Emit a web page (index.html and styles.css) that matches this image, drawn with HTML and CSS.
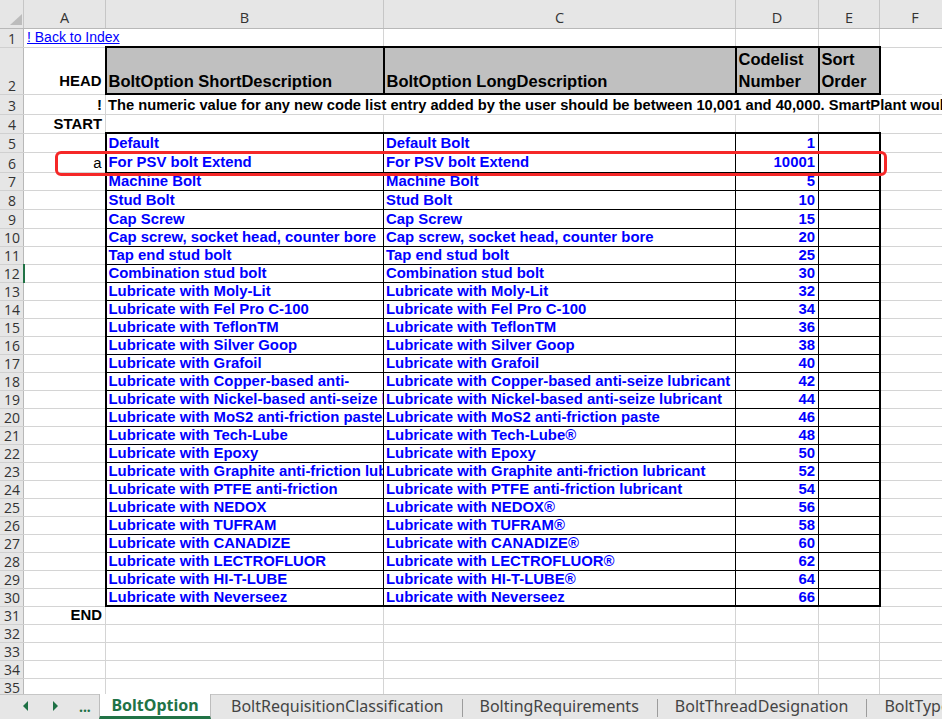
FILE: index.html
```html
<!DOCTYPE html>
<html lang="en">
<head>
  <meta charset="UTF-8" />
  <title>BoltOption</title>
  <link rel="stylesheet" href="styles.css">
</head>
<body>

  <!-- Worksheet -->
  <div class="sheet">
    <table class="grid">
      <colgroup>
        <col class="c-rh"><col class="c-a"><col class="c-b"><col class="c-c"><col class="c-d"><col class="c-e"><col class="c-f">
      </colgroup>
      <thead>
        <tr class="r-cols">
          <th class="corner"><svg width="12" height="11" viewBox="0 0 12 11"><path d="M12 0V11H0Z" fill="#bcbcbc"/></svg></th>
          <th class="ch">A</th><th class="ch">B</th><th class="ch">C</th><th class="ch">D</th><th class="ch">E</th><th class="ch">F</th>
        </tr>
      </thead>
      <tbody>
        <tr><th class="rh">1</th><td colspan="2"><a href="#" class="link">! Back to Index</a></td><td></td><td></td><td></td><td></td></tr>
        <tr class="r46">
          <th class="rh">2</th>
          <td class="lbl head">HEAD</td>
          <td class="hd">BoltOption ShortDescription</td>
          <td class="hd">BoltOption LongDescription</td>
          <td class="hd">Codelist Number</td>
          <td class="hd">Sort Order</td>
          <td></td>
        </tr>
        <tr class="r20"><th class="rh">3</th><td class="lbl">!</td><td colspan="5" class="note">The numeric value for any new code list entry added by the user should be between 10,001 and 40,000. SmartPlant would not recognise values outside of this range.</td></tr>
        <tr class="r19"><th class="rh">4</th><td class="lbl">START</td><td></td><td></td><td></td><td></td><td></td></tr>

        <tr class="r19"><th class="rh">5</th><td></td><td class="d dl dt">Default</td><td class="d dt">Default Bolt</td><td class="d dt num">1</td><td class="d dr dt"></td><td></td></tr>
        <tr class="r20"><th class="rh">6</th><td class="flag">a</td><td class="d dl">For PSV bolt Extend</td><td class="d">For PSV bolt Extend</td><td class="d num">10001</td><td class="d dr"></td><td></td></tr>
        <tr><th class="rh">7</th><td></td><td class="d dl">Machine Bolt</td><td class="d">Machine Bolt</td><td class="d num">5</td><td class="d dr"></td><td></td></tr>
        <tr class="r19"><th class="rh">8</th><td></td><td class="d dl">Stud Bolt</td><td class="d">Stud Bolt</td><td class="d num">10</td><td class="d dr"></td><td></td></tr>
        <tr class="r19"><th class="rh">9</th><td></td><td class="d dl">Cap Screw</td><td class="d">Cap Screw</td><td class="d num">15</td><td class="d dr"></td><td></td></tr>
        <tr><th class="rh">10</th><td></td><td class="d dl">Cap screw, socket head, counter bore</td><td class="d">Cap screw, socket head, counter bore</td><td class="d num">20</td><td class="d dr"></td><td></td></tr>
        <tr><th class="rh">11</th><td></td><td class="d dl">Tap end stud bolt</td><td class="d">Tap end stud bolt</td><td class="d num">25</td><td class="d dr"></td><td></td></tr>
        <tr><th class="rh sel">12</th><td></td><td class="d dl">Combination stud bolt</td><td class="d">Combination stud bolt</td><td class="d num">30</td><td class="d dr"></td><td></td></tr>
        <tr><th class="rh">13</th><td></td><td class="d dl">Lubricate with Moly-Lit</td><td class="d">Lubricate with Moly-Lit</td><td class="d num">32</td><td class="d dr"></td><td></td></tr>
        <tr><th class="rh">14</th><td></td><td class="d dl">Lubricate with Fel Pro C-100</td><td class="d">Lubricate with Fel Pro C-100</td><td class="d num">34</td><td class="d dr"></td><td></td></tr>
        <tr><th class="rh">15</th><td></td><td class="d dl">Lubricate with TeflonTM</td><td class="d">Lubricate with TeflonTM</td><td class="d num">36</td><td class="d dr"></td><td></td></tr>
        <tr><th class="rh">16</th><td></td><td class="d dl">Lubricate with Silver Goop</td><td class="d">Lubricate with Silver Goop</td><td class="d num">38</td><td class="d dr"></td><td></td></tr>
        <tr><th class="rh">17</th><td></td><td class="d dl">Lubricate with Grafoil</td><td class="d">Lubricate with Grafoil</td><td class="d num">40</td><td class="d dr"></td><td></td></tr>
        <tr><th class="rh">18</th><td></td><td class="d dl"><div class="wrap">Lubricate with Copper-based anti-seize lubricant</div></td><td class="d">Lubricate with Copper-based anti-seize lubricant</td><td class="d num">42</td><td class="d dr"></td><td></td></tr>
        <tr><th class="rh">19</th><td></td><td class="d dl">Lubricate with Nickel-based anti-seize lubricant</td><td class="d">Lubricate with Nickel-based anti-seize lubricant</td><td class="d num">44</td><td class="d dr"></td><td></td></tr>
        <tr><th class="rh">20</th><td></td><td class="d dl">Lubricate with MoS2 anti-friction paste</td><td class="d">Lubricate with MoS2 anti-friction paste</td><td class="d num">46</td><td class="d dr"></td><td></td></tr>
        <tr><th class="rh">21</th><td></td><td class="d dl">Lubricate with Tech-Lube</td><td class="d">Lubricate with Tech-Lube&reg;</td><td class="d num">48</td><td class="d dr"></td><td></td></tr>
        <tr><th class="rh">22</th><td></td><td class="d dl">Lubricate with Epoxy</td><td class="d">Lubricate with Epoxy</td><td class="d num">50</td><td class="d dr"></td><td></td></tr>
        <tr><th class="rh">23</th><td></td><td class="d dl">Lubricate with Graphite anti-friction lubricant</td><td class="d">Lubricate with Graphite anti-friction lubricant</td><td class="d num">52</td><td class="d dr"></td><td></td></tr>
        <tr><th class="rh">24</th><td></td><td class="d dl"><div class="wrap">Lubricate with PTFE anti-friction lubricant</div></td><td class="d">Lubricate with PTFE anti-friction lubricant</td><td class="d num">54</td><td class="d dr"></td><td></td></tr>
        <tr><th class="rh">25</th><td></td><td class="d dl">Lubricate with NEDOX</td><td class="d">Lubricate with NEDOX&reg;</td><td class="d num">56</td><td class="d dr"></td><td></td></tr>
        <tr><th class="rh">26</th><td></td><td class="d dl">Lubricate with TUFRAM</td><td class="d">Lubricate with TUFRAM&reg;</td><td class="d num">58</td><td class="d dr"></td><td></td></tr>
        <tr><th class="rh">27</th><td></td><td class="d dl">Lubricate with CANADIZE</td><td class="d">Lubricate with CANADIZE&reg;</td><td class="d num">60</td><td class="d dr"></td><td></td></tr>
        <tr><th class="rh">28</th><td></td><td class="d dl">Lubricate with LECTROFLUOR</td><td class="d">Lubricate with LECTROFLUOR&reg;</td><td class="d num">62</td><td class="d dr"></td><td></td></tr>
        <tr><th class="rh">29</th><td></td><td class="d dl">Lubricate with HI-T-LUBE</td><td class="d">Lubricate with HI-T-LUBE&reg;</td><td class="d num">64</td><td class="d dr"></td><td></td></tr>
        <tr><th class="rh">30</th><td></td><td class="d dl db">Lubricate with Neverseez</td><td class="d db">Lubricate with Neverseez</td><td class="d db num">66</td><td class="d dr db"></td><td></td></tr>

        <tr><th class="rh">31</th><td class="lbl">END</td><td></td><td></td><td></td><td></td><td></td></tr>
        <tr><th class="rh">32</th><td></td><td></td><td></td><td></td><td></td><td></td></tr>
        <tr><th class="rh">33</th><td></td><td></td><td></td><td></td><td></td><td></td></tr>
        <tr><th class="rh">34</th><td></td><td></td><td></td><td></td><td></td><td></td></tr>
        <tr><th class="rh">35</th><td></td><td></td><td></td><td></td><td></td><td></td></tr>
      </tbody>
    </table>

    <!-- red marker around the new entry -->
    <div class="mark"></div>
  </div>

  <!-- Sheet tabs -->
  <div class="tabs">
    <div class="nav">
      <svg width="6" height="10" viewBox="0 0 6 10"><path d="M5 0V10L0 5Z"/></svg>
      <svg width="6" height="10" viewBox="0 0 6 10"><path d="M1 0V10L6 5Z"/></svg>
      <span class="more">...</span>
    </div>
    <div class="tab active">BoltOption</div>
    <div class="tab">BoltRequisitionClassification</div>
    <span class="sep"></span>
    <div class="tab">BoltingRequirements</div>
    <span class="sep"></span>
    <div class="tab">BoltThreadDesignation</div>
    <span class="sep"></span>
    <div class="tab">BoltType</div>
  </div>

</body>
</html>
```

FILE: styles.css
```css
* {
  box-sizing: border-box;
}

body {
  margin: 0;
  height: 100vh;
  overflow: hidden;
  display: flex;
  flex-direction: column;
  background-color: #fff;
  font-family: "Liberation Sans", Arial, sans-serif;
}

.sheet {
  position: relative;
  flex: 1;
  overflow: hidden;
}

/* Grid */
.grid {
  border-collapse: collapse;
  table-layout: fixed;
  width: 950px;
}

.c-rh { width: 23px; }
.c-a { width: 82px; }
.c-b { width: 278px; }
.c-c { width: 352px; }
.c-d { width: 83px; }
.c-e { width: 61px; }
.c-f { width: 71px; }

.grid tr {
  height: 18px;
}

.grid tr.r19 { height: 19px; }
.grid tr.r20 { height: 20px; }
.grid tr.r46 { height: 46px; }
.grid tr.r-cols { height: 28px; }

.grid td {
  border: 1px solid #d4d4d4;
  padding: 0 3px 1px 2px;
  font-size: 14.9px;
  line-height: 16px;
  vertical-align: bottom;
  white-space: nowrap;
  overflow: hidden;
}

/* Headers */
.corner {
  background-color: #e6e6e6;
  border: 1px solid #e6e6e6;
  border-right-color: #c6c6c6;
  border-bottom-color: #b8b8b8;
  text-align: right;
  vertical-align: bottom;
  padding: 0 1px 3px 0;
  line-height: 0;
}

.ch {
  background-color: #e6e6e6;
  border: 1px solid #e6e6e6;
  border-right-color: #c6c6c6;
  border-bottom-color: #b8b8b8;
  font-family: "Open Sans", sans-serif;
  font-size: 14.5px;
  font-weight: normal;
  color: #333;
  vertical-align: bottom;
  padding-bottom: 1px;
}

.rh {
  background-color: #e6e6e6;
  border: 1px solid #e6e6e6;
  border-bottom-color: #d0d0d0;
  border-right-color: #b8b8b8;
  font-family: "Open Sans", sans-serif;
  font-size: 14px;
  font-weight: normal;
  color: #333;
  line-height: 16px;
  padding: 0;
  text-align: center;
  vertical-align: bottom;
}

.rh.sel {
  border-right: 2px solid #217346;
}

/* Cells */
.grid td:first-of-type {
  padding-left: 3px;
}

.link {
  color: #0000ff;
  font-size: 14px;
}

.lbl {
  font-weight: bold;
  text-align: right;
}

.grid td.head {
  line-height: 22px;
  padding-bottom: 2px;
}

.flag {
  text-align: right;
}

.grid td.note {
  font-weight: bold;
  font-size: 14.7px;
}

.grid td.hd {
  background-color: #c0c0c0;
  border: 2px solid #000;
  font-size: 16.5px;
  font-weight: bold;
  line-height: 22px;
  white-space: normal;
  padding: 0 3px 1px 2px;
}

.grid td.d {
  border: 1px solid #000;
  color: #0000ff;
  font-weight: bold;
  vertical-align: middle;
  padding-bottom: 0;
}

.grid td.dl { border-left: 2px solid #000; }
.grid td.dr { border-right: 2px solid #000; }
.grid td.dt { border-top: 2px solid #000; }
.grid td.db { border-bottom: 2px solid #000; }

.num {
  text-align: right;
}

.wrap {
  white-space: normal;
  height: 16px;
  overflow: hidden;
}

.mark {
  position: absolute;
  left: 55px;
  top: 151px;
  width: 832px;
  height: 25px;
  border: 3px solid #f52828;
  border-radius: 6px;
}

/* Tabs */
.tabs {
  flex: none;
  height: 25px;
  display: flex;
  align-items: stretch;
  background-color: #e6e6e6;
  border-top: 1px solid #c6c6c6;
  font-family: "Noto Sans", sans-serif;
  font-size: 16px;
  color: #444;
  white-space: nowrap;
}

.nav {
  width: 99px;
  flex: none;
  display: flex;
  align-items: center;
  padding: 0 0 2px 23px;
  gap: 23px;
  fill: #1e7145;
  color: #1e7145;
}

.more {
  font-weight: bold;
  font-size: 14px;
  margin-left: -2px;
}

.tab {
  flex: none;
  display: flex;
  align-items: center;
  padding: 0 18px 3px 17px;
}

.tab.active {
  width: 112px;
  justify-content: center;
  padding: 0 0 1px;
  margin: -1px 3px 0 0;
  background-color: #fff;
  border-left: 1px solid #bdbdbd;
  border-right: 1px solid #bdbdbd;
  border-bottom: 3px solid #217346;
  color: #217346;
  font-weight: bold;
}

.sep {
  flex: none;
  width: 1px;
  margin: 4px 0 2px;
  background-color: #9c9c9c;
}
```
